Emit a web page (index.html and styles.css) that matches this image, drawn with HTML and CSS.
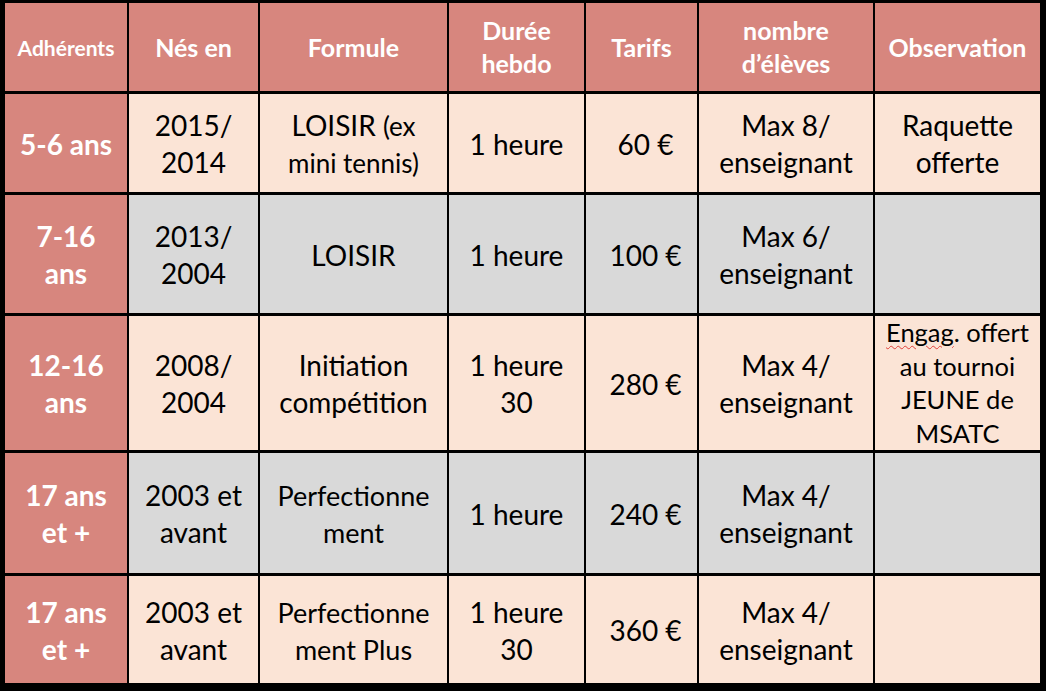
FILE: index.html
```html
<!DOCTYPE html>
<html lang="fr">
<head>
<meta charset="utf-8">
<title>Tarifs école de tennis</title>
<link rel="stylesheet" href="styles.css">
</head>
<body>
<div class="table">
  <div class="cell head small">Adhérents</div>
  <div class="cell head">Nés en</div>
  <div class="cell head">Formule</div>
  <div class="cell head">Durée<br>hebdo</div>
  <div class="cell head">Tarifs</div>
  <div class="cell head">nombre<br>d’élèves</div>
  <div class="cell head">Observation</div>

  <div class="cell side">5-6 ans</div>
  <div class="cell peach">2015/<br>2014</div>
  <div class="cell peach"><span>LOISIR <span class="sm">(ex<br>mini tennis)</span></span></div>
  <div class="cell peach">1 heure</div>
  <div class="cell peach price">60 €</div>
  <div class="cell peach">Max 8/<br>enseignant</div>
  <div class="cell peach">Raquette<br>offerte</div>

  <div class="cell side">7-16<br>ans</div>
  <div class="cell grey">2013/<br>2004</div>
  <div class="cell grey">LOISIR</div>
  <div class="cell grey">1 heure</div>
  <div class="cell grey price">100 €</div>
  <div class="cell grey">Max 6/<br>enseignant</div>
  <div class="cell grey"></div>

  <div class="cell side">12-16<br>ans</div>
  <div class="cell peach">2008/<br>2004</div>
  <div class="cell peach">Initiation<br>compétition</div>
  <div class="cell peach">1 heure<br>30</div>
  <div class="cell peach price">280 €</div>
  <div class="cell peach">Max 4/<br>enseignant</div>
  <div class="cell peach note"><span><span class="spell">Engag</span>. offert<br>au tournoi<br>JEUNE de<br>MSATC</span></div>

  <div class="cell side">17 ans<br>et +</div>
  <div class="cell grey">2003 et<br>avant</div>
  <div class="cell grey sm28">Perfectionne<br>ment</div>
  <div class="cell grey">1 heure</div>
  <div class="cell grey price">240 €</div>
  <div class="cell grey">Max 4/<br>enseignant</div>
  <div class="cell grey"></div>

  <div class="cell side">17 ans<br>et +</div>
  <div class="cell peach">2003 et<br>avant</div>
  <div class="cell peach sm28">Perfectionne<br>ment Plus</div>
  <div class="cell peach">1 heure<br>30</div>
  <div class="cell peach price">360 €</div>
  <div class="cell peach">Max 4/<br>enseignant</div>
  <div class="cell peach"></div>
</div>
</body>
</html>
```

FILE: styles.css
```css
html, body {
  margin: 0;
  padding: 0;
  background: #000;
}

.table {
  display: grid;
  grid-template-columns: 122px 129px 187px 135px 111px 174px 165px;
  grid-template-rows: 88px 98px 118px 134px 120px 107px;
  column-gap: 2px;
  row-gap: 3px;
  padding: 3px 6px 8px 5px;
  width: 1046px;
  height: 691px;
  box-sizing: border-box;
  background: #000;
  font-family: Lato, "Open Sans", sans-serif;
}

.cell {
  display: flex;
  align-items: center;
  justify-content: center;
  text-align: center;
  font-size: 28px;
  line-height: 37px;
  color: #000;
  padding-top: 2px;
  box-sizing: border-box;
}

.head {
  background: #d7867e;
  color: #fff;
  font-weight: 700;
  font-size: 25px;
  line-height: 33px;
  padding-top: 0;
}

.head.small {
  font-size: 21px;
}

.side {
  background: #d7867e;
  color: #fff;
  font-weight: 700;
  font-size: 28px;
  line-height: 37px;
}

.peach {
  background: #fbe4d6;
}

.grey {
  background: #d9d9d9;
}

.price {
  padding-left: 8px;
}

.sm {
  font-size: 26px;
  line-height: 33.5px;
}

.note {
  font-size: 25.5px;
  line-height: 33.5px;
  padding-top: 0;
}

.sm28 {
  font-size: 27px;
  line-height: 37px;
}

.spell {
  text-decoration: underline wavy #e0403a;
  text-decoration-thickness: 1px;
  text-underline-offset: 3px;
}
```
